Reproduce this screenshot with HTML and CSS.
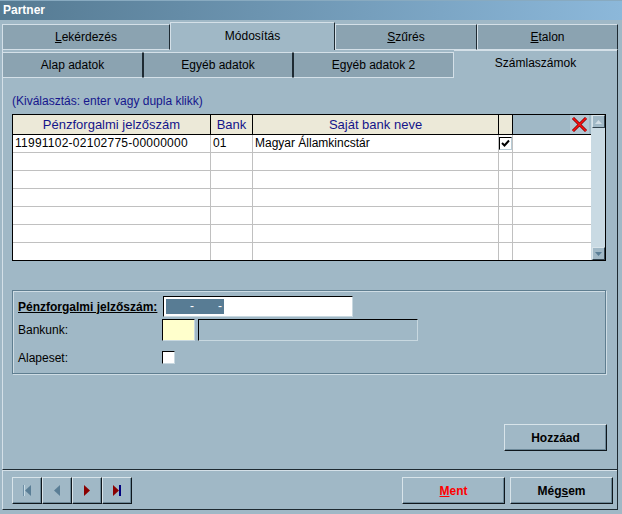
FILE: index.html
```html
<!DOCTYPE html>
<html lang="hu">
<head>
<meta charset="utf-8">
<title>Partner</title>
<link rel="stylesheet" href="styles.css">
</head>
<body>
<div class="titlebar">Partner</div>
<div class="tabs1">
  <div class="tab w168"><span><u>L</u>ekérdezés</span></div>
  <div class="tab active w165"><span>Módosítás</span></div>
  <div class="tab w142"><span><u>S</u>zűrés</span></div>
  <div class="tab w141"><span><u>E</u>talon</span></div>
</div>
<div class="page">
  <div class="tabs2">
    <div class="tab w140"><span>Alap adatok</span></div>
    <div class="tab w150 dl"><span>Egyéb adatok</span></div>
    <div class="tab w161 dl lr"><span>Egyéb adatok 2</span></div>
    <div class="tab active w163 nr"><span>Számlaszámok</span></div>
  </div>
  <div class="content">
    <div class="hint">(Kiválasztás: enter vagy dupla klikk)</div>
    <div class="grid">
      <div class="h">Pénzforgalmi jelzőszám</div>
      <div class="h">Bank</div>
      <div class="h">Saját bank neve</div>
      <div class="h"></div>
      <div class="h hx"><div class="xbtn"><svg width="17" height="17" viewBox="0 0 17 17"><path d="M2 2 L15 15 M15 2 L2 15" stroke="#7a0000" stroke-width="3" fill="none"/><path d="M2 2 L15 15 M15 2 L2 15" stroke="#ff1010" stroke-width="1.6" fill="none"/></svg></div></div>
      <div class="sb">
        <div class="sbtn"><svg width="7" height="4" viewBox="0 0 7 4"><path d="M0 4 L3.5 0 L7 4 Z" fill="#d0dde5"/></svg></div>
        <div class="sbtn"><svg width="7" height="4" viewBox="0 0 7 4"><path d="M0 0 L3.5 4 L7 0 Z" fill="#5a7e96"/></svg></div>
      </div>

      <div class="c c1">11991102-02102775-00000000</div>
      <div class="c">01</div>
      <div class="c">Magyar Államkincstár</div>
      <div class="c cc"><div class="chk"><svg width="9" height="9" viewBox="0 0 9 9"><path d="M1 4 L3.5 6.5 L8 1.5" stroke="#000" stroke-width="2" fill="none"/></svg></div></div>
      <div class="c c5"></div>

      <div class="c"></div><div class="c"></div><div class="c"></div><div class="c"></div><div class="c c5"></div>
      <div class="c"></div><div class="c"></div><div class="c"></div><div class="c"></div><div class="c c5"></div>
      <div class="c"></div><div class="c"></div><div class="c"></div><div class="c"></div><div class="c c5"></div>
      <div class="c"></div><div class="c"></div><div class="c"></div><div class="c"></div><div class="c c5"></div>
      <div class="c"></div><div class="c"></div><div class="c"></div><div class="c"></div><div class="c c5"></div>
      <div class="c last"></div><div class="c last"></div><div class="c last"></div><div class="c last"></div><div class="c c5 last"></div>
    </div>

    <div class="group">
      <div class="frow r1">
        <div class="lbl b"><u>Pénzforgalmi jelzőszám:</u></div>
        <div class="inp1"><div class="mask"><span>-</span><span>-</span></div></div>
      </div>
      <div class="frow r2">
        <div class="lbl">Bankunk:</div>
        <div class="yel"></div>
        <div class="grey"></div>
      </div>
      <div class="frow r3">
        <div class="lbl">Alapeset:</div>
        <div class="cb"></div>
      </div>
    </div>

    <div class="addrow"><div class="btn big">Hozzáad</div></div>
  </div>
</div>
<div class="footer">
  <div class="nav">
    <div class="btn nb"><svg width="10" height="11" viewBox="0 0 10 11"><rect x="1" y="0" width="2" height="11" fill="#c8dce6"/><rect x="1" y="0" width="1" height="11" fill="#6f90a6"/><path d="M9 0 L3 5.5 L9 11 Z" fill="#5a7e96"/></svg></div>
    <div class="btn nb"><svg width="6" height="11" viewBox="0 0 6 11"><path d="M6 0 L0 5.5 L6 11 Z" fill="#5a7e96"/></svg></div>
    <div class="btn nb"><svg width="6" height="11" viewBox="0 0 6 11"><path d="M0 0 L6 5.5 L0 11 Z" fill="#8b0000"/></svg></div>
    <div class="btn nb"><svg width="9" height="11" viewBox="0 0 9 11"><path d="M0 0 L6 5.5 L0 11 Z" fill="#8b0000"/><rect x="6" y="0" width="2" height="11" fill="#00007f"/></svg></div>
  </div>
  <div class="acts">
    <div class="btn big red"><u>M</u>ent</div>
    <div class="btn big">Még<u>s</u>em</div>
  </div>
</div>
</body>
</html>
```

FILE: styles.css
```css
* { box-sizing: border-box; }
html, body { margin: 0; padding: 0; }
body {
  width: 622px;
  height: 514px;
  overflow: hidden;
  background: #a0b8c6;
  font-family: "Liberation Sans", Arial, sans-serif;
  font-size: 12px;
  color: #000;
}
u { text-decoration: underline; }

.titlebar {
  height: 20px;
  background: linear-gradient(to right, #557a92, #8cb8da);
  border-top: 1px solid #88aac0;
  color: #fff;
  font-weight: bold;
  font-size: 12px;
  line-height: 18px;
  padding-left: 3px;
}

.tab {
  display: flex;
  align-items: center;
  justify-content: center;
  border-top: 1px solid #d4e0e8;
  border-left: 1px solid #d4e0e8;
  border-right: 1px solid #1e2a32;
  background: #8ba3b1;
}
.w168 { width: 168px; }
.w165 { width: 165px; }
.w142 { width: 142px; }
.w141 { width: 141px; }
.w140 { width: 140px; }
.w150 { width: 150px; }
.w161 { width: 161px; }
.w163 { width: 163px; }

.tabs1 {
  display: flex;
  align-items: flex-end;
  height: 30px;
  margin-left: 2px;
  width: 616px;
}
.tabs1 .tab {
  height: 26px;
  border-bottom: 1px solid #d4e0e8;
}
.tabs1 .tab.active {
  height: 28px;
  background: #a0b8c6;
  border-bottom: none;
  padding-bottom: 2px;
}

.page {
  margin-left: 2px;
  width: 616px;
  height: 419px;
  border-left: 1px solid #d4e0e8;
  border-right: 1px solid #1e2a32;
  display: flex;
  flex-direction: column;
}
.tabs2 {
  display: flex;
  align-items: flex-end;
  height: 28px;
}
.tabs2 .tab {
  height: 26px;
  border-bottom: 1px solid #d4e0e8;
}
.tabs2 .tab:first-child { border-left: none; }
.tabs2 .tab.dl { border-left: 1px solid #1e2a32; }
.tabs2 .tab.lr { border-right: 1px solid #d4e0e8; }
.tabs2 .tab.active {
  height: 28px;
  background: #a0b8c6;
  border-bottom: none;
  border-left: none;
  border-right: none;
  padding-bottom: 3px;
}

.content {
  flex: 1;
  padding: 16px 0 0 9px;
}
.hint {
  height: 14px;
  line-height: 14px;
  margin-bottom: 6px;
  color: #16168c;
}

.grid {
  width: 594px;
  border: 1px solid #000;
  display: grid;
  grid-template-columns: 198px 42px 246px 14px 78px 14px;
  grid-template-rows: 20px repeat(6, 18px) 17px;
  background: #fff;
}
.h {
  background: #ece9d8;
  border-right: 1px solid #000;
  border-bottom: 1px solid #000;
  color: #14148a;
  font-size: 13px;
  text-align: center;
  line-height: 19px;
}
.h.hx {
  background: #a0b8c6;
  border-right: none;
  display: flex;
  justify-content: flex-end;
  padding-right: 2px;
}
.xbtn {
  width: 19px;
  height: 19px;
  background: #b2c6d2;
  display: flex;
  align-items: center;
  justify-content: center;
}
.sb {
  grid-column: 6;
  grid-row: 1 / -1;
  background: #c9dae3;
  display: flex;
  flex-direction: column;
  justify-content: space-between;
  padding: 0 0 0 1px;
}
.sbtn {
  width: 13px;
  height: 13px;
  background: #a0b8c6;
  border-top: 1px solid #d8e4ea;
  border-left: 1px solid #d8e4ea;
  border-right: 1px solid #33444f;
  border-bottom: 1px solid #33444f;
  display: flex;
  align-items: center;
  justify-content: center;
}
.c {
  border-right: 1px solid #c0c0c0;
  border-bottom: 1px solid #c0c0c0;
  line-height: 17px;
  padding-left: 2px;
  white-space: nowrap;
  overflow: hidden;
}
.c1 { letter-spacing: 0.25px; }
.c.c5 { border-right: none; }
.c.last { border-bottom: none; }
.cc { padding: 2px 0 0 0; }
.chk {
  width: 13px;
  height: 13px;
  background: #fff;
  border: 1px solid #000;
  border-right-color: #b8ccd6;
  border-bottom-color: #b8ccd6;
  box-shadow: 0 0 0 0 #a0b8c6;
  display: flex;
  align-items: center;
  justify-content: center;
}

.group {
  margin-top: 29px;
  width: 594px;
  height: 84px;
  border: 1px solid #5f7e90;
  box-shadow: inset 1px 1px 0 #cfdde5, 1px 1px 0 #cfdde5;
  padding: 5px 0 0 5px;
}
.frow {
  display: flex;
  align-items: center;
}
.lbl { width: 144px; }
.lbl.b { font-weight: bold; width: 145px; }
.r1 { height: 21px; }
.r2 { height: 22px; margin-top: 2px; }
.r3 { height: 13px; margin-top: 10px; }
.inp1 {
  width: 190px;
  height: 21px;
  background: #fff;
  border: 1px solid #000;
  border-right-color: #c8d8e0;
  border-bottom-color: #c8d8e0;
  padding: 2px;
}
.mask {
  width: 58px;
  height: 15px;
  background: #587c94;
  color: #fff;
  display: flex;
  line-height: 15px;
}
.mask span { margin-left: 24px; }
.yel {
  width: 33px;
  height: 22px;
  background: #ffffcc;
  border: 1px solid #000;
  border-right-color: #c8d8e0;
  border-bottom-color: #c8d8e0;
}
.grey {
  width: 220px;
  height: 22px;
  margin-left: 3px;
  border: 1px solid #000;
  border-right-color: #c8d8e0;
  border-bottom-color: #c8d8e0;
}
.cb {
  width: 13px;
  height: 13px;
  background: #fff;
  border: 1px solid #000;
  border-right-color: #c8d8e0;
  border-bottom-color: #c8d8e0;
}

.addrow {
  margin-top: 50px;
  width: 595px;
  display: flex;
  justify-content: flex-end;
}
.btn {
  display: flex;
  align-items: center;
  justify-content: center;
  height: 27px;
  background: #a0b8c6;
  border-top: 1px solid #d8e4ea;
  border-left: 1px solid #d8e4ea;
  border-right: 1px solid #0e161c;
  border-bottom: 1px solid #0e161c;
  box-shadow: inset -1px -1px 0 #6c8898;
}
.btn.big {
  width: 103px;
  font-weight: bold;
}
.btn.red { color: #ff0000; }
.nb { width: 30px; }

.footer {
  margin-left: 2px;
  width: 616px;
  height: 41px;
  border-top: 1px solid #1e2a32;
  border-left: 1px solid #d4e0e8;
  border-right: 1px solid #1e2a32;
  border-bottom: 1px solid #1e2a32;
  box-shadow: inset 0 1px 0 #d4e0e8;
  display: flex;
  justify-content: space-between;
  padding: 7px 4px 0 9px;
}
.nav { display: flex; }
.acts { display: flex; gap: 5px; }
```
